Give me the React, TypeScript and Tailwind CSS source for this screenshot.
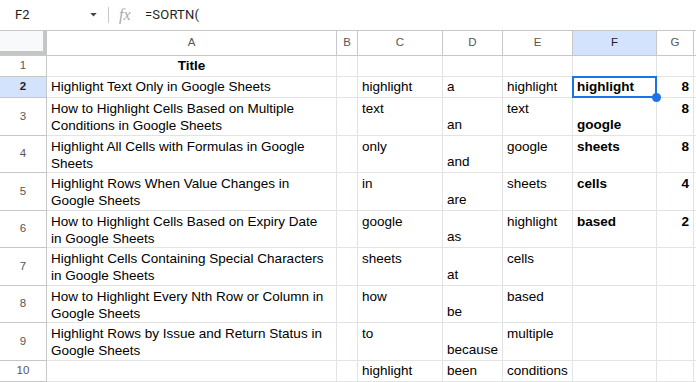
import React from "react";

type Cell = {
  lines?: string[];
  bold?: boolean;
  align?: "left" | "center" | "right";
  v?: "top" | "bottom";
};

const widths = [290, 21, 85, 60, 70, 84, 37];
const letters = ["A", "B", "C", "D", "E", "F", "G"];

const rowsData: { n: number; h: number; cells: Cell[] }[] = [
  { n: 1, h: 21, cells: [{ lines: ["Title"], bold: true, align: "center" }, {}, {}, {}, {}, {}, {}] },
  {
    n: 2,
    h: 21,
    cells: [
      { lines: ["Highlight Text Only in Google Sheets"] },
      {},
      { lines: ["highlight"] },
      { lines: ["a"] },
      { lines: ["highlight"] },
      { lines: ["highlight"], bold: true },
      { lines: ["8"], bold: true, align: "right" },
    ],
  },
  {
    n: 3,
    h: 38,
    cells: [
      { lines: ["How to Highlight Cells Based on Multiple", "Conditions in Google Sheets"], v: "top" },
      {},
      { lines: ["text"], v: "top" },
      { lines: ["an"] },
      { lines: ["text"], v: "top" },
      { lines: ["google"], bold: true },
      { lines: ["8"], bold: true, align: "right", v: "top" },
    ],
  },
  {
    n: 4,
    h: 37,
    cells: [
      { lines: ["Highlight All Cells with Formulas in Google", "Sheets"], v: "top" },
      {},
      { lines: ["only"], v: "top" },
      { lines: ["and"] },
      { lines: ["google"], v: "top" },
      { lines: ["sheets"], bold: true, v: "top" },
      { lines: ["8"], bold: true, align: "right", v: "top" },
    ],
  },
  {
    n: 5,
    h: 38,
    cells: [
      { lines: ["Highlight Rows When Value Changes in", "Google Sheets"], v: "top" },
      {},
      { lines: ["in"], v: "top" },
      { lines: ["are"] },
      { lines: ["sheets"], v: "top" },
      { lines: ["cells"], bold: true, v: "top" },
      { lines: ["4"], bold: true, align: "right", v: "top" },
    ],
  },
  {
    n: 6,
    h: 37,
    cells: [
      { lines: ["How to Highlight Cells Based on Expiry Date", "in Google Sheets"], v: "top" },
      {},
      { lines: ["google"], v: "top" },
      { lines: ["as"] },
      { lines: ["highlight"], v: "top" },
      { lines: ["based"], bold: true, v: "top" },
      { lines: ["2"], bold: true, align: "right", v: "top" },
    ],
  },
  {
    n: 7,
    h: 38,
    cells: [
      { lines: ["Highlight Cells Containing Special Characters", "in Google Sheets"], v: "top" },
      {},
      { lines: ["sheets"], v: "top" },
      { lines: ["at"] },
      { lines: ["cells"], v: "top" },
      {},
      {},
    ],
  },
  {
    n: 8,
    h: 37,
    cells: [
      { lines: ["How to Highlight Every Nth Row or Column in", "Google Sheets"], v: "top" },
      {},
      { lines: ["how"], v: "top" },
      { lines: ["be"] },
      { lines: ["based"], v: "top" },
      {},
      {},
    ],
  },
  {
    n: 9,
    h: 38,
    cells: [
      { lines: ["Highlight Rows by Issue and Return Status in", "Google Sheets"], v: "top" },
      {},
      { lines: ["to"], v: "top" },
      { lines: ["because"] },
      { lines: ["multiple"], v: "top" },
      {},
      {},
    ],
  },
  {
    n: 10,
    h: 21,
    cells: [{}, {}, { lines: ["highlight"] }, { lines: ["been"] }, { lines: ["conditions"] }, {}, {}],
  },
];

function DataCell({ cell, w, selected }: { cell: Cell; w: number; selected: boolean }) {
  const alignCls =
    cell.align === "center" ? "text-center" : cell.align === "right" ? "text-right" : "text-left";
  const vCls = cell.v === "top" ? "justify-start pt-[2px]" : "justify-end pb-[2px]";
  return (
    <div
      className={`relative shrink-0 h-full border-r border-b border-[#e2e3e3] flex flex-col px-[4px] overflow-visible ${vCls} ${
        selected ? "z-10" : ""
      }`}
      style={{ width: w }}
    >
      {(cell.lines || []).map((l, i) => (
        <div
          key={i}
          className={`whitespace-nowrap leading-[17px] text-[13.5px] text-black ${alignCls} ${
            cell.bold ? "font-bold" : ""
          }`}
        >
          {l}
        </div>
      ))}
      {selected && (
        <>
          <div className="absolute left-[-1px] top-[-1px] right-[-1px] bottom-[-1px] border-2 border-[#1a73e8] pointer-events-none" />
          <div className="absolute right-[-5px] bottom-[-5px] w-[9px] h-[9px] rounded-full bg-[#1a73e8]" />
        </>
      )}
    </div>
  );
}

export default function App() {
  return (
    <div className="w-[696px] h-[382px] overflow-hidden bg-white font-['Liberation_Sans',Arial,sans-serif]">
      {/* formula bar */}
      <div className="h-[31px] flex items-center border-b border-[#c7c7c7] bg-white">
        <div className="w-[108px] flex items-center pl-[15px] pr-[11px] h-full">
          <span className="text-[13px] text-[#1f1f1f] font-['Roboto',sans-serif] flex-1">F2</span>
          <svg width="7" height="4" viewBox="0 0 8 5">
            <polygon points="0,0 8,0 4,4.5" fill="#444746" />
          </svg>
        </div>
        <div className="w-px h-[16px] bg-[#c7c7c7]" />
        <span className="ml-[10px] w-[24px] text-[16px] italic text-[#a8a8a8] font-['Liberation_Serif',serif] leading-none">
          fx
        </span>
        <span className="ml-[2px] text-[13px] text-[#1f1f1f] font-['Roboto',sans-serif] tracking-[0.2px]">
          =SORTN(
        </span>
      </div>

      {/* column headers */}
      <div className="flex h-[25px]">
        <div className="relative w-[47px] shrink-0 h-full bg-[#f8f9fa] border-b border-[#c7c7c7]">
          <div className="absolute right-0 top-0 bottom-0 w-[4px] bg-[#c4c7c5]" />
          <div className="absolute left-0 right-0 bottom-0 h-[4px] bg-[#c4c7c5]" />
        </div>
        {letters.map((l, i) => (
          <div
            key={l}
            className={`shrink-0 h-full flex items-center justify-center border-r border-b border-[#c7c7c7] text-[11.5px] ${
              l === "F" ? "bg-[#d3e3fd] text-[#1f1f1f]" : "bg-white text-[#575757]"
            }`}
            style={{ width: widths[i] }}
          >
            {l}
          </div>
        ))}
        <div className="flex-1 h-full border-b border-[#c7c7c7]" />
      </div>

      {/* rows */}
      {rowsData.map((r) => (
        <div key={r.n} className="flex" style={{ height: r.h }}>
          <div
            className={`w-[47px] shrink-0 h-full flex items-center justify-center border-r border-b border-[#c7c7c7] text-[11.5px] ${
              r.n === 2 ? "bg-[#d3e3fd] text-[#1f1f1f] font-bold" : "bg-white text-[#575757]"
            }`}
          >
            {r.n}
          </div>
          {r.cells.map((c, i) => (
            <DataCell key={i} cell={c} w={widths[i]} selected={r.n === 2 && i === 5} />
          ))}
          <div className="flex-1 h-full border-b border-[#e2e3e3]" />
        </div>
      ))}
    </div>
  );
}
